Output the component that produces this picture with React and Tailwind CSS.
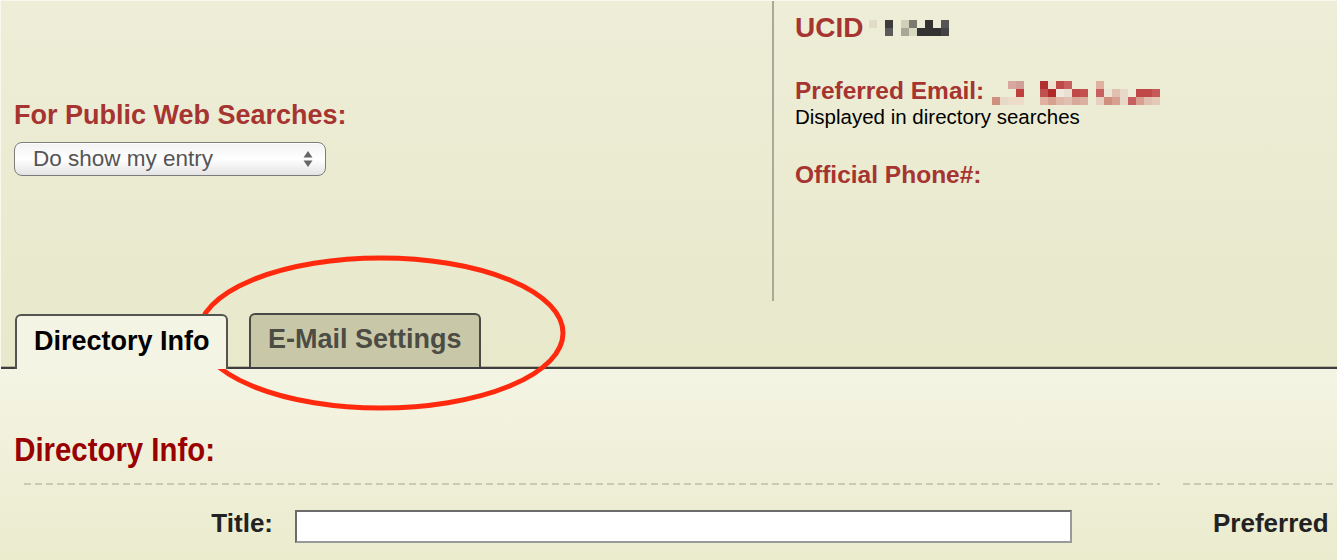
import React from "react";

const ucidCells = [
  [0, 0, "#e2dcc4"],
  [2, 0, "#3c3c3c"], [2, 1, "#5a5a5a"],
  [4, 0, "#d0d0b8"], [4, 1, "#a8a898"],
  [5, 0, "#7a7a70"], [5, 1, "#d8d8c0"],
  [6, 1, "#333333"],
  [7, 0, "#333333"], [7, 1, "#333333"],
  [8, 1, "#333333"],
  [9, 0, "#555555"], [9, 1, "#444444"],
];

const emailCells = [
  [0, 2, "#d09080"], [1, 2, "#e8d8c8"], [2, 2, "#ecdcc8"], [3, 2, "#ecdcc8"],
  [2, 0, "#d8a8a0"], [3, 0, "#d0a098"], [3, 1, "#c04040"],
  [6, 0, "#b03030"], [6, 1, "#c05050"], [6, 2, "#e0b0a0"],
  [7, 0, "#efe0d0"], [7, 1, "#b02828"], [7, 2, "#d8a090"],
  [8, 0, "#c04848"], [8, 1, "#f0e8e0"], [8, 2, "#e0b8a8"],
  [9, 0, "#c86060"], [9, 1, "#e8e0d0"], [9, 2, "#e0c0b0"],
  [10, 1, "#c04848"], [10, 2, "#d8a898"], [11, 1, "#c45050"], [11, 2, "#dcb0a0"],
  [13, 0, "#e0b0a0"], [13, 1, "#c86060"], [13, 2, "#e8d0c0"],
  [14, 1, "#ece4d4"], [14, 2, "#d09080"],
  [15, 1, "#e0c0b0"], [15, 2, "#d8a090"],
  [16, 1, "#e8d8c8"], [16, 2, "#e8d8c8"],
  [17, 2, "#c86060"],
  [18, 1, "#c04848"], [18, 2, "#d8a090"], [19, 1, "#c04848"], [19, 2, "#e0c0b0"],
  [20, 1, "#c85858"], [20, 2, "#e4c8b8"],
];

function Mosaic({ cells, cw, ch, cols, rows }) {
  return (
    <svg width={cols * cw} height={rows * ch} viewBox={`0 0 ${cols * cw} ${rows * ch}`}>
      {cells.map(([x, y, c], i) => (
        <rect key={i} x={x * cw} y={y * ch} width={cw} height={ch} fill={c} />
      ))}
    </svg>
  );
}

export default function App() {
  return (
    <div className="relative w-[1337px] h-[560px] overflow-hidden font-['Liberation_Sans',Arial,sans-serif]">
      {/* top area */}
      <div className="bg-gradient-to-b from-[#eeeed8] to-[#e8e8cb] border-t border-l border-[#f8f8ec]">
        <div className="flex h-[300px]">
          <div className="w-[771px] pl-[13px] pt-[99px]">
            <div className="text-[27px] leading-[31px] font-bold text-[#a63430]">For Public Web Searches:</div>
            <div className="mt-[11px] w-[312px] h-[34px] rounded-[8px] border border-[#7c7c7c] bg-gradient-to-b from-[#f2f2f2] via-white to-[#e4e4e4] shadow-[inset_0_1px_0_#fff] flex items-center justify-between pl-[18px] pr-[12px]">
              <span className="text-[22.5px] text-[#555555] leading-none">Do show my entry</span>
              <svg width="10" height="20" viewBox="0 0 10 20">
                <path d="M5 2 L9.5 8.5 L0.5 8.5 Z" fill="#666" />
                <path d="M5 18 L9.5 11.5 L0.5 11.5 Z" fill="#666" />
              </svg>
            </div>
          </div>
          <div className="flex-1 border-l-2 border-[#a9a995] pl-[21px] pt-[11px]">
            <div className="flex items-center gap-[6px]">
              <span className="text-[28px] leading-[32px] font-bold text-[#a63430]">UCID</span>
              <Mosaic cells={ucidCells} cw={8} ch={8} cols={10} rows={2} />
            </div>
            <div className="mt-[33px] flex items-center gap-[8px]">
              <span className="text-[24.5px] leading-[28px] font-bold text-[#a63430]">Preferred Email:</span>
              <div className="mt-[4px]">
                <Mosaic cells={emailCells} cw={8} ch={8} cols={21} rows={3} />
              </div>
            </div>
            <div className="text-[20.5px] leading-[22px] text-black mt-[1px]">Displayed in directory searches</div>
            <div className="mt-[33px] text-[24.5px] leading-[28px] font-bold text-[#a63430]">Official Phone#:</div>
          </div>
        </div>
        {/* tabs */}
        <div className="flex items-end gap-[21px] pl-[14px] pt-[12px] border-b-2 border-[#3d3d3d] shadow-[0_-1px_0_#b9b9a2_inset]">
          <div className="h-[55px] -mb-[2px] w-[213px] rounded-t-[6px] border-2 border-b-0 border-[#555550] bg-[#f4f4e4] flex items-center pl-[17px] pb-[3px] relative z-10">
            <span className="text-[27px] font-bold text-black leading-none">Directory Info</span>
          </div>
          <div className="h-[54px] w-[232px] rounded-t-[6px] border-2 border-b-0 border-[#4a4a45] bg-[#c8c8a8] flex items-center pl-[17px] pb-[3px]">
            <span className="text-[27px] font-bold text-[#4c4c44] leading-none">E-Mail Settings</span>
          </div>
        </div>
      </div>

      {/* lower panel */}
      <div className="h-[193px] bg-gradient-to-b from-[#f4f4e4] to-[#ebebce] pt-[64px]">
        <div className="pl-[16px] text-[33px] leading-[34px] font-bold text-[#990000] origin-left scale-x-[0.89] whitespace-nowrap">
          Directory Info:
        </div>
        <div className="mt-[16px] flex gap-[23px] pl-[24px]">
          <div className="w-[1136px] h-[2px] bg-[repeating-linear-gradient(90deg,#c9c9b4_0_7px,transparent_7px_11px)]" />
          <div className="flex-1 h-[2px] bg-[repeating-linear-gradient(90deg,#c9c9b4_0_7px,transparent_7px_11px)]" />
        </div>
        <div className="mt-[25px] flex items-start">
          <div className="w-[273px] text-right text-[26px] font-bold text-[#222222] leading-[26px]">Title:</div>
          <div className="ml-[22px] w-[777px] h-[33px] bg-white border-2 border-[#6b6b6b] border-b-[#9a9a9a] border-r-[#9a9a9a]" />
          <div className="ml-[141px] text-[26px] font-bold text-[#222222] leading-[26px] whitespace-nowrap">Preferred</div>
        </div>
      </div>

      {/* red annotation ellipse */}
      <svg className="absolute left-[194px] top-[253px] pointer-events-none" width="374" height="162" viewBox="0 0 374 162">
        <ellipse cx="187" cy="80" rx="182" ry="75" fill="none" stroke="#ff2a0e" strokeWidth="5" />
      </svg>
    </div>
  );
}
